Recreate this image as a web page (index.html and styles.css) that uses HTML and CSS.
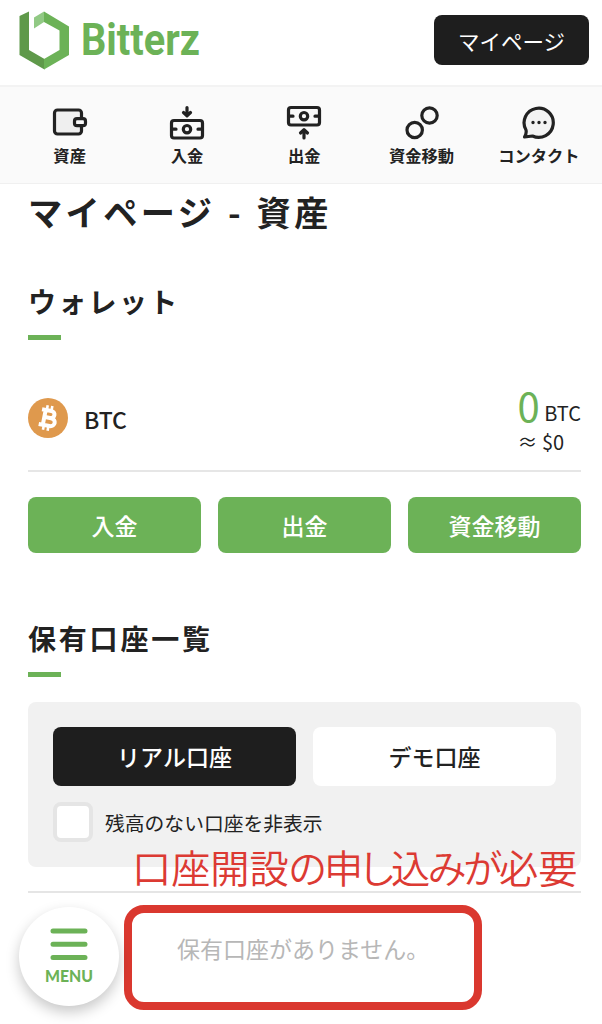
FILE: index.html
```html
<!DOCTYPE html>
<html lang="ja">
<head>
<meta charset="utf-8">
<title>Bitterz マイページ</title>
<link rel="stylesheet" href="styles.css">
</head>
<body>
<header class="header">
  <svg class="logo" viewBox="0 0 190 66" width="190" height="66" aria-label="Bitterz">
    <path fill="#5f994a" d="M0.500 5L10 0.500V39L25.500 48V58.500L0.500 44Z"/>
    <path fill="#6cb257" d="M25 0.500L50 15.500V44L25 58.500V48L40.500 39V19.500L25 11Z"/>
    <path fill="#91c984" d="M25 0.500V11L15 17.500V6.500Z"/>
    <text class="logo-text" x="62" y="44" textLength="119" lengthAdjust="spacingAndGlyphs">Bitterz</text>
  </svg>
  <a class="mypage">マイページ</a>
</header>
<nav class="nav">
  <a class="nav-item">
    <svg class="icon" viewBox="0 0 36 36" width="36" height="36"><rect x="2.500" y="5" width="27" height="24" rx="3" fill="#efefef"/><rect x="22.500" y="13.700" width="11" height="7" rx="2.500" fill="#fafafa"/></svg>
    <span>資産</span></a>
  <a class="nav-item">
    <svg class="icon" viewBox="0 0 36 36" width="36" height="36"><rect x="2.500" y="15.500" width="31" height="17.500" rx="2.500"/><circle cx="18" cy="24.200" r="3.700"/><path d="M3 24.200h4M29 24.200h4M18 2.500v8M14.500 7.500l3.500 3.300 3.500-3.300"/></svg>
    <span>入金</span></a>
  <a class="nav-item">
    <svg class="icon" viewBox="0 0 36 36" width="36" height="36"><rect x="2.500" y="2.500" width="31" height="17.500" rx="2.500"/><circle cx="18" cy="11.200" r="3.700"/><path d="M3 11.200h4M29 11.200h4M18 33v-8M14.500 28l3.500-3.300 3.500 3.300"/></svg>
    <span>出金</span></a>
  <a class="nav-item">
    <svg class="icon" viewBox="0 0 36 36" width="36" height="36"><circle cx="25.500" cy="10.500" r="7.700"/><circle cx="10.700" cy="25" r="7.700"/></svg>
    <span>資金移動</span></a>
  <a class="nav-item">
    <svg class="icon" viewBox="0 0 36 36" width="36" height="36"><path fill="#f3f3f3" d="M5 25A14.600 14.600 0 1 1 11.500 31L3.500 32C5.300 29 5.600 27.500 5 25Z"/><path class="dots" d="M12 17.500h.01M18 17.500h.01M24 17.500h.01"/></svg>
    <span>コンタクト</span></a>
</nav>
<main class="main">
  <h1 class="title">マイページ - 資産</h1>
  <h2 class="heading wallet-heading">ウォレット</h2>
  <section class="wallet">
    <svg class="coin" viewBox="0 0 40 40" width="40" height="40"><circle cx="20" cy="20" r="20" fill="#df994d"/>
      <g transform="rotate(11 20 20)" fill="none" stroke="#fff" stroke-width="4"><path d="M12.500 12.500h9.500c5 0 5 7 0 7.100H17h6c6 0 6 8 0 8H12M16.200 12v15.500"/><path stroke-width="2.600" d="M17.300 7.500V12M22 7.500V12M17.300 27.500v5M22 27.500v5"/></g></svg>
    <span class="coin-name">BTC</span>
    <div class="balance">
      <div class="amount"><strong>0</strong> BTC</div>
      <div class="fiat">≈ $0</div>
    </div>
  </section>
  <div class="actions"><a>入金</a><a>出金</a><a>資金移動</a></div>
  <h2 class="heading accounts-heading">保有口座一覧</h2>
  <section class="panel">
    <div class="tabs"><a class="tab active">リアル口座</a><a class="tab">デモ口座</a></div>
    <label class="filter"><span class="checkbox"></span><span class="filter-label">残高のない口座を非表示</span></label>
  </section>
  <section class="accounts"><p>保有口座がありません。</p></section>
</main>
<div class="note">口座開設<span class="note-tight">の申し込みが</span>必要</div>
<div class="note-frame"></div>
<a class="menu">
  <svg viewBox="0 0 38 34" width="38" height="34"><path stroke="#6cb257" stroke-width="5" stroke-linecap="round" d="M3 3h32M3 16.200h32M3 29.400h32"/></svg>
  <svg viewBox="0 0 56 22" width="56" height="22"><text class="menu-text" x="4" y="16.500" textLength="48" lengthAdjust="spacingAndGlyphs">MENU</text></svg>
</a>
</body>
</html>
```
FILE: styles.css
```css
* { box-sizing: border-box; }
body {
  margin: 0;
  height: 1024px;
  position: relative;
  overflow: hidden;
  background: #fff;
  color: #222;
  font-family: "Noto Sans CJK JP", sans-serif;
  white-space: nowrap;
}
.header {
  height: 85px;
  padding: 11px 13px 0 19px;
  display: flex;
  justify-content: space-between;
}
.logo { overflow: visible; }
.logo-text { font: 700 43.500px Roboto, sans-serif; fill: #6cb257; }
.mypage {
  width: 155px;
  height: 50px;
  margin-top: 4px;
  border-radius: 8px;
  background: #1e1e1e;
  color: #fff;
  font-size: 21.500px;
  line-height: 51px;
  text-align: center;
}
.nav {
  height: 99px;
  display: grid;
  grid-template-columns: repeat(5, 117.300px);
  padding: 18px 0 0 11px;
  background: #fafafa;
  border-top: 2px solid #f3f3f3;
  border-bottom: 1px solid #f0f0f0;
}
.nav-item {
  display: flex;
  flex-direction: column;
  align-items: center;
  font-size: 16.300px;
  font-weight: 700;
  line-height: 24px;
  gap: 2px;
}
.icon {
  fill: none;
  stroke: #222;
  stroke-width: 3.200;
  stroke-linecap: round;
  stroke-linejoin: round;
}
.dots { stroke-width: 3.400; }
.main { padding: 0 21px 0 28px; }
.title {
  margin: 2px 0 0;
  height: 50px;
  font-size: 34.200px;
  line-height: 50px;
  letter-spacing: 3.400px;
  word-spacing: 1.500px;
}
.heading {
  margin: 65px 0 0;
  font-size: 28px;
  line-height: 40px;
  letter-spacing: 2.800px;
}
.heading::after {
  content: "";
  display: block;
  width: 33px;
  height: 5px;
  margin-top: 14px;
  background: #6cb257;
}
.wallet-heading { margin-top: 45px; letter-spacing: 2.300px; }
.wallet {
  height: 132px;
  padding-top: 45px;
  display: flex;
  align-items: center;
  border-bottom: 2px solid #e6e6e6;
}
.coin { margin-top: -20px; }
.coin-name { margin: -18px 0 0 16px; font-size: 23px; line-height: 30px; font-weight: 500; }
.balance { margin: -14px 0 0 auto; }
.amount { font-size: 20px; line-height: 36px; }
.amount strong { font-size: 40px; line-height: 34px; font-weight: 400; color: #6cb257; vertical-align: -1px; }
.fiat { font-size: 20px; line-height: 22px; }
.actions {
  display: grid;
  grid-template-columns: repeat(3, 1fr);
  gap: 17px;
  margin-top: 25px;
}
.actions a {
  height: 56px;
  border-radius: 8px;
  background: #6cb257;
  color: #fff;
  font-size: 23px;
  font-weight: 500;
  line-height: 57px;
  text-align: center;
}
.panel {
  margin-top: 25px;
  height: 165px;
  padding: 25px;
  border-radius: 8px;
  background: #f1f1f1;
}
.tabs { display: grid; grid-template-columns: 1fr 1fr; gap: 17px; }
.tab {
  height: 59px;
  border-radius: 8px;
  background: #fff;
  font-size: 23px;
  font-weight: 500;
  line-height: 59px;
  text-align: center;
}
.tab.active { background: #1e1e1e; color: #fff; }
.filter {
  display: flex;
  align-items: center;
  gap: 12px;
  margin-top: 16px;
  font-size: 19.800px;
}
.filter-label { line-height: 42px; height: 40px; }
.checkbox { width: 40px; height: 40px; background: #fff; border: 4px solid #e5e5e5; border-radius: 8px; }
.accounts {
  margin-top: 24px;
  border-top: 2px solid #e5e5e5;
  padding: 37px 0 0 149px;
  color: #b7b7b7;
}
.accounts p { margin: 0; font-size: 23px; line-height: 36px; }
.note {
  position: absolute;
  left: 132px;
  top: 839px;
  color: #dc3a33;
  font-size: 39.200px;
  font-weight: 350;
  line-height: 54px;
  font-feature-settings: "palt";
}
.note-tight { letter-spacing: -2.600px; }
.note-frame {
  position: absolute;
  left: 124px;
  top: 905px;
  width: 358px;
  height: 105px;
  border: 8px solid #da382f;
  border-radius: 20px;
}
.menu {
  position: absolute;
  left: 19px;
  top: 907px;
  width: 100px;
  height: 99px;
  padding-top: 21px;
  border-radius: 50%;
  background: #fff;
  box-shadow: 0 6px 14px rgba(0, 0, 0, .22);
  display: flex;
  flex-direction: column;
  align-items: center;
  gap: 3px;
}
.menu-text { font: 900 16.500px Lato, sans-serif; fill: #6cb257; }
```
